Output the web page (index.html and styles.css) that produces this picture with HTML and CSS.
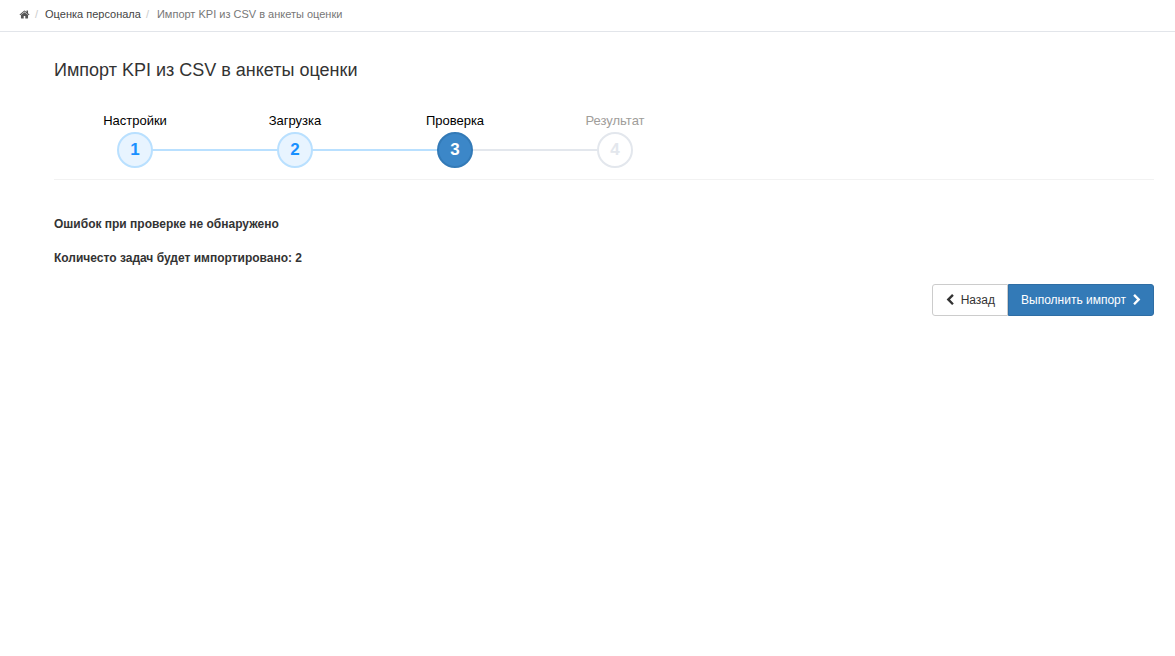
FILE: index.html
```html
<!DOCTYPE html>
<html lang="ru">
<head>
  <meta charset="UTF-8">
  <title>Импорт KPI из CSV в анкеты оценки</title>
  <link rel="stylesheet" href="styles.css">
</head>
<body>
  <div class="crumbs">
    <a class="crumb-home" href="#" aria-label="Главная">
      <svg class="icon-home" viewBox="0 0 1792 1792"><path d="M1472 992v480q0 26-19 45t-45 19h-384v-384h-256v384h-384q-26 0-45-19t-19-45v-480q0-1 .5-3t.5-3l575-474 575 474q1 2 1 6zm223-69l-62 74q-8 9-21 11h-3q-13 0-21-7l-692-577-692 577q-12 8-24 7-13-2-21-11l-62-74q-8-10-7-23.500t11-21.500l719-599q32-26 76-26t76 26l244 204v-195q0-14 9-23t23-9h192q14 0 23 9t9 23v408l219 182q10 8 11 21.500t-7 23.500z"/></svg>
    </a>
    <span class="crumb-sep">/</span>
    <a class="crumb-link" href="#">Оценка персонала</a>
    <span class="crumb-sep">/</span>
    <span class="crumb-current">Импорт KPI из CSV в анкеты оценки</span>
  </div>

  <div class="page">
    <h1 class="page-title">Импорт KPI из CSV в анкеты оценки</h1>

    <!-- Steps -->
    <div class="steps">
      <div class="step step-done">
        <div class="step-label">Настройки</div>
        <div class="step-dot">1</div>
      </div>
      <div class="step step-done">
        <div class="step-label">Загрузка</div>
        <div class="step-dot">2</div>
      </div>
      <div class="step step-active">
        <div class="step-label">Проверка</div>
        <div class="step-dot">3</div>
      </div>
      <div class="step step-todo">
        <div class="step-label">Результат</div>
        <div class="step-dot">4</div>
      </div>
    </div>

    <p class="result-line">Ошибок при проверке не обнаружено</p>
    <p class="result-line">Количесто задач будет импортировано: 2</p>

    <div class="actions">
      <a class="btn btn-default" href="#">
        <svg class="icon-chevron" viewBox="0 0 1792 1792"><path d="M1427 301l-531 531 531 531q19 19 19 45t-19 45l-166 166q-19 19-45 19t-45-19l-742-742q-19-19-19-45t19-45l742-742q19-19 45-19t45 19l166 166q19 19 19 45t-19 45z"/></svg>
        Назад
      </a>
      <a class="btn btn-primary" href="#">
        Выполнить импорт
        <svg class="icon-chevron" viewBox="0 0 1792 1792"><path d="M1363 877l-742 742q-19 19-45 19t-45-19l-166-166q-19-19-19-45t19-45l531-531-531-531q-19-19-19-45t19-45l166-166q19-19 45-19t45 19l742 742q19 19 19 45t-19 45z"/></svg>
      </a>
    </div>
  </div>
</body>
</html>
```

FILE: styles.css
```css
* { box-sizing: border-box; }
body {
  margin: 0;
  background: #fff;
  font-family: "Liberation Sans", Arial, sans-serif;
  font-size: 12px;
  color: #333;
}
a { text-decoration: none; }

.crumbs {
  display: flex;
  align-items: center;
  height: 32px;
  padding: 0 0 3px 19px;
  border-bottom: 1px solid #e2e5ea;
  font-size: 11px;
}
.crumb-home { display: flex; color: #555; }
.icon-home { width: 11px; height: 11px; fill: #555; }
.crumb-sep { margin: 0 7px 0 5px; color: #ccc; }
.crumb-link { color: #444; }
.crumb-current { color: #777; margin-left: 1px; }

.page { padding: 0 21px 0 54px; }
.page-title {
  margin: 28px 0 0;
  font-size: 18px;
  line-height: 20px;
  font-weight: 400;
  color: #333;
}

.steps {
  display: flex;
  margin-top: 33px;
  padding: 0 0 11px 1px;
  border-bottom: 1px solid #f2f2f2;
}
.step {
  position: relative;
  width: 160px;
  display: flex;
  flex-direction: column;
  align-items: center;
}
/* line from this step's dot to the next one */
.step:not(:last-child)::after {
  content: "";
  position: absolute;
  left: 80px;
  width: 160px;
  bottom: 17px;
  height: 2px;
  background: #b9e0ff;
}
.step-active::after { background: #e3e7ed !important; }
.step-label {
  height: 19px;
  font-size: 13px;
  line-height: 15px;
  color: #000;
}
.step-dot {
  position: relative;
  z-index: 1;
  width: 36px;
  height: 36px;
  border: 2px solid;
  border-radius: 50%;
  font-size: 17px;
  font-weight: 700;
  line-height: 32px;
  text-align: center;
}
.step-done .step-dot { background: #e8f4ff; border-color: #b9e0ff; color: #1890ff; }
.step-active .step-dot { background: #3c87c8; border-color: #337ab7; color: #fff; }
.step-todo .step-dot { background: #fff; border-color: #e3e7ed; color: #e3e7ed; }
.step-todo .step-label { color: #a09d9a; }

.result-line {
  margin: 0 0 20px;
  font-weight: 700;
  line-height: 14px;
  color: #333;
}
.steps + .result-line { margin-top: 37px; }

.actions {
  display: flex;
  justify-content: flex-end;
  margin-top: -1px;
}
.btn {
  display: flex;
  align-items: center;
  height: 32px;
  border: 1px solid;
  font-size: 12px;
}
.btn-default {
  gap: 5px;
  padding: 0 12px 0 11px;
  background: #fff;
  border-color: #ccc;
  border-radius: 3px 0 0 3px;
  color: #333;
}
.btn-primary {
  gap: 5px;
  padding: 0 10px 0 12px;
  background: #337ab7;
  border-color: #2e6da4;
  border-radius: 0 3px 3px 0;
  color: #fff;
}
.icon-chevron { width: 12px; height: 12px; fill: currentColor; }
```
